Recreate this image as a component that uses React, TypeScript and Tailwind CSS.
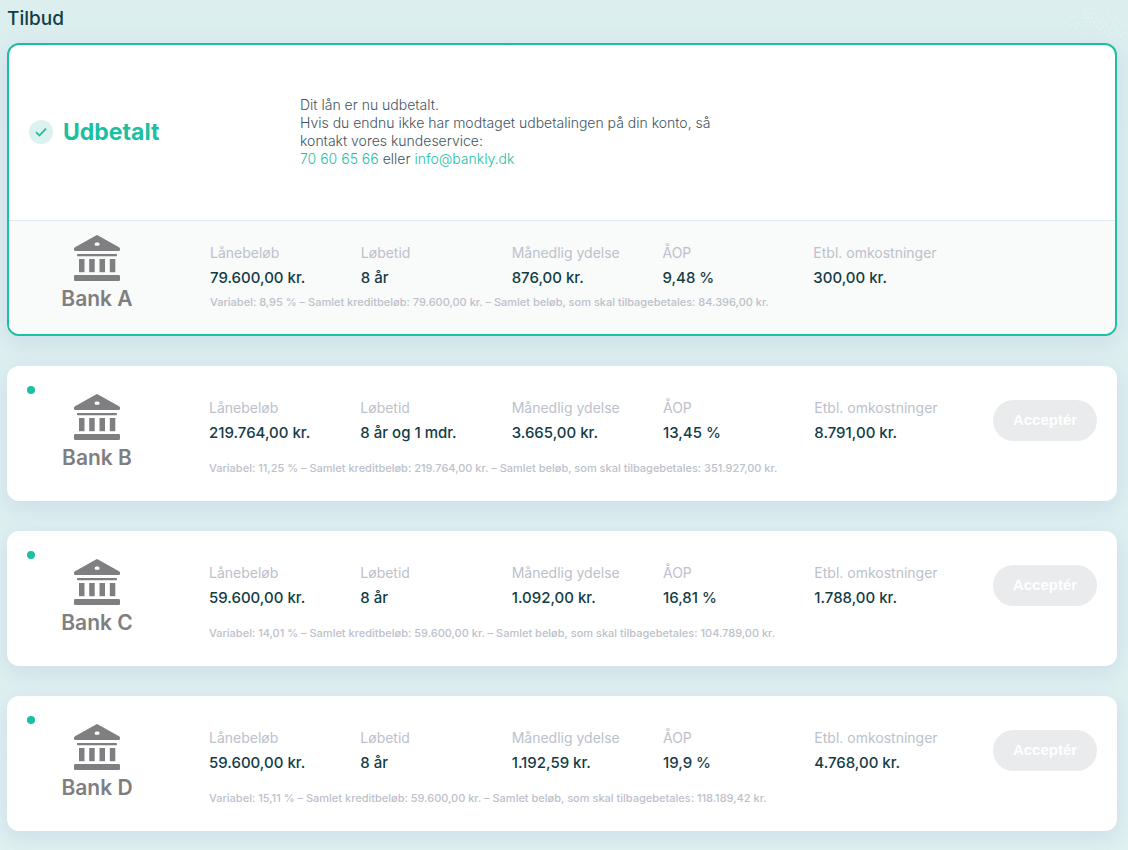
type Offer = {
  bank: string;
  amount: string;
  period: string;
  monthly: string;
  apr: string;
  fees: string;
  note: string;
};

const paidOut: Offer = {
  bank: "Bank A",
  amount: "79.600,00 kr.",
  period: "8 år",
  monthly: "876,00 kr.",
  apr: "9,48 %",
  fees: "300,00 kr.",
  note: "Variabel: 8,95 % – Samlet kreditbeløb: 79.600,00 kr. – Samlet beløb, som skal tilbagebetales: 84.396,00 kr.",
};

const offers: Offer[] = [
  {
    bank: "Bank B",
    amount: "219.764,00 kr.",
    period: "8 år og 1 mdr.",
    monthly: "3.665,00 kr.",
    apr: "13,45 %",
    fees: "8.791,00 kr.",
    note: "Variabel: 11,25 % – Samlet kreditbeløb: 219.764,00 kr. – Samlet beløb, som skal tilbagebetales: 351.927,00 kr.",
  },
  {
    bank: "Bank C",
    amount: "59.600,00 kr.",
    period: "8 år",
    monthly: "1.092,00 kr.",
    apr: "16,81 %",
    fees: "1.788,00 kr.",
    note: "Variabel: 14,01 % – Samlet kreditbeløb: 59.600,00 kr. – Samlet beløb, som skal tilbagebetales: 104.789,00 kr.",
  },
  {
    bank: "Bank D",
    amount: "59.600,00 kr.",
    period: "8 år",
    monthly: "1.192,59 kr.",
    apr: "19,9 %",
    fees: "4.768,00 kr.",
    note: "Variabel: 15,11 % – Samlet kreditbeløb: 59.600,00 kr. – Samlet beløb, som skal tilbagebetales: 118.189,42 kr.",
  },
];

// Positions of the pale specks in the page's top right corner.
const specks = [
  [2, 14], [7, 17], [3, 19], [8, 7], [12, 13], [15, 14], [12, 19], [19, 25],
  [21, 1], [20, 5], [23, 3], [26, 4], [21, 9], [24, 8], [28, 9], [31, 5],
  [22, 13], [26, 12], [30, 13], [34, 10], [19, 16], [24, 17], [28, 16], [32, 17],
  [36, 14], [38, 7], [40, 11], [35, 20], [39, 18], [43, 15], [37, 24], [41, 22],
  [45, 20], [47, 9], [44, 5], [49, 13], [51, 18], [48, 24], [53, 8], [55, 14],
  [54, 22], [58, 17], [59, 4], [61, 11], [60, 24], [62, 19], [44, 27], [57, 27],
];

function BankLogo({ name }: { name: string }) {
  return (
    <div className="flex flex-col items-center text-[#7f7f82]">
      <svg viewBox="0 0 46 46" className="size-[46px]" fill="currentColor" aria-hidden="true">
        <path
          fillRule="evenodd"
          d="M22 .4q1-.6 2 0L45 12.2q1 .6 1 1.6v1q0 1.2-1.2 1.2H1.2Q0 16 0 14.8v-1q0-1 1-1.6ZM22.2 7.6a1.6 1.6 0 0 0 0 3.2h1.8a1.6 1.6 0 0 0 0-3.2Z"
        />
        <rect x="3" y="19" width="40" height="2.2" rx=".8" />
        <rect x="5" y="24" width="5.5" height="13.2" />
        <rect x="15.2" y="24" width="5.5" height="13.2" />
        <rect x="25.5" y="24" width="5.5" height="13.2" />
        <rect x="35.8" y="24" width="5.5" height="13.2" />
        <rect y="40" width="46" height="6" rx="1.2" />
      </svg>
      <p className="mt-1 text-[21px] leading-7 font-semibold">{name}</p>
    </div>
  );
}

function Fact({ label, value }: { label: string; value: string }) {
  return (
    <div className="whitespace-nowrap">
      <dt className="text-sm leading-5 text-[#bcc1cb]">{label}</dt>
      <dd className="mt-[5px] text-[15px] leading-5 font-medium text-[#123c46]">{value}</dd>
    </div>
  );
}

function Facts({ offer }: { offer: Offer }) {
  return (
    <dl className="col-span-5 grid grid-cols-5">
      <Fact label="Lånebeløb" value={offer.amount} />
      <Fact label="Løbetid" value={offer.period} />
      <Fact label="Månedlig ydelse" value={offer.monthly} />
      <Fact label="ÅOP" value={offer.apr} />
      <Fact label="Etbl. omkostninger" value={offer.fees} />
    </dl>
  );
}

function PaidOutCard({ offer }: { offer: Offer }) {
  return (
    <article className="overflow-hidden rounded-xl border-2 border-[#1dbfa2] bg-white shadow-[0_2px_24px_rgba(208,222,240,0.8),0_8px_16px_rgba(60,90,130,0.07)]">
      <div className="flex items-center px-5 pt-[51px] pb-[52px]">
        <div className="flex w-[271px] shrink-0 items-center gap-[10px]">
          <span className="flex size-6 items-center justify-center rounded-full bg-[#dcf2ef]">
            <svg viewBox="0 0 12 10" className="h-[10px] w-3" fill="none" stroke="#1dbfa2" strokeWidth="1.8" aria-hidden="true">
              <path d="M1 5.2 4.4 8.5 11 1.6" />
            </svg>
          </span>
          <h2 className="text-[23px] leading-8 font-bold text-[#1dbfa2]">Udbetalt</h2>
        </div>
        <p className="w-[420px] text-sm leading-[18px] font-light text-[#3f5561]">
          Dit lån er nu udbetalt.
          <br />
          Hvis du endnu ikke har modtaget udbetalingen på din konto, så kontakt vores kundeservice:
          <br />
          <a href="tel:70606566" className="text-[#1dbfa2]">70 60 65 66</a> eller{" "}
          <a href="mailto:info@bankly.dk" className="text-[#1dbfa2]">info@bankly.dk</a>
        </p>
      </div>
      <div className="flex border-t border-[#dfe9ef] bg-[#f9fafa] pt-[14px] pb-[21px]">
        <div className="w-[201px] shrink-0 pr-[25px]">
          <BankLogo name={offer.bank} />
        </div>
        <div className="grow pt-2">
          <div className="grid grid-cols-6">
            <Facts offer={offer} />
          </div>
          <p className="mt-[6px] text-[11px] leading-4 font-medium text-[#bcc1cb]">{offer.note}</p>
        </div>
      </div>
    </article>
  );
}

function OfferCard({ offer }: { offer: Offer }) {
  return (
    <article className="relative flex rounded-xl bg-white pt-7 pb-[25px] shadow-[0_2px_24px_rgba(208,222,240,0.8),0_8px_16px_rgba(60,90,130,0.07)]">
      <span className="absolute top-5 left-5 size-2 rounded-full bg-[#1dbfa2]" />
      <div className="w-[202px] shrink-0 pr-[22px]">
        <BankLogo name={offer.bank} />
      </div>
      <div className="grow pt-1">
        <div className="grid grid-cols-6">
          <Facts offer={offer} />
          <div className="flex items-center justify-end pr-5">
            <button
              type="button"
              disabled
              className="h-[41px] w-[104px] rounded-full bg-[#e9ebed] font-['Liberation_Sans',sans-serif] text-[15px] font-bold text-white"
            >
              Acceptér
            </button>
          </div>
        </div>
        <p className="mt-[17px] text-[11px] leading-4 font-medium text-[#bcc1cb]">{offer.note}</p>
      </div>
    </article>
  );
}

export default function App() {
  return (
    <main className="relative min-h-screen bg-linear-to-b from-[#dcefee] to-[#e0f1f0] pt-[7px] pr-[11px] pb-5 pl-[7px] font-['Inter','Liberation_Sans',sans-serif]">
      <svg viewBox="0 0 64 28" className="absolute top-[9px] right-0 h-7 w-16" fill="#f6fbfa" aria-hidden="true">
        {specks.map(([x, y]) => (
          <circle key={`${x}-${y}`} cx={x} cy={y} r=".6" />
        ))}
      </svg>
      <h1 className="text-[19px] leading-6 font-medium text-[#123c46]">Tilbud</h1>
      <div className="mt-3 flex flex-col gap-[30px]">
        <PaidOutCard offer={paidOut} />
        {offers.map((offer) => (
          <OfferCard key={offer.bank} offer={offer} />
        ))}
      </div>
    </main>
  );
}
